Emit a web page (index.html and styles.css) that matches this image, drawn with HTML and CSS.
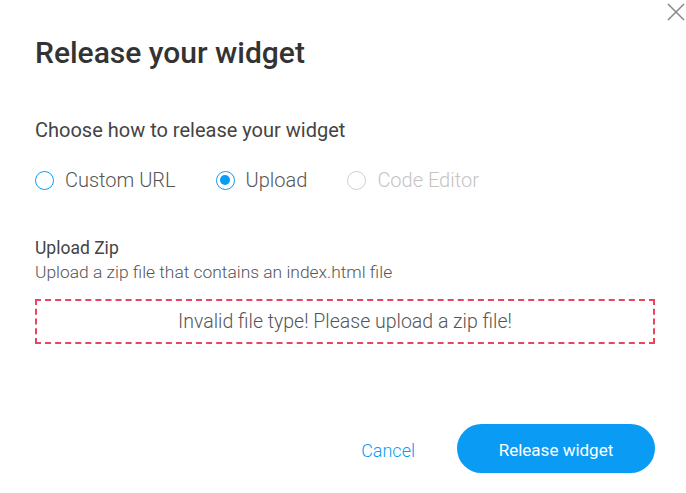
FILE: index.html
```html
<!DOCTYPE html>
<html lang="en">
<head>
<meta charset="utf-8">
<title>Release your widget</title>
<link rel="stylesheet" href="styles.css">
</head>
<body>
<div class="dialog">
  <button class="close" aria-label="Close">
    <svg width="18" height="18" viewBox="0 0 18 18"><path d="M1 1L17 17M17 1L1 17" stroke="#8a8a8a" stroke-width="1.6" fill="none"/></svg>
  </button>
  <h1 class="title">Release your widget</h1>
  <p class="prompt">Choose how to release your widget</p>
  <div class="radios">
    <label class="radio"><span class="dot"></span>Custom URL</label>
    <label class="radio checked"><span class="dot"></span>Upload</label>
    <label class="radio disabled"><span class="dot"></span>Code Editor</label>
  </div>
  <div class="field-label">Upload Zip</div>
  <div class="field-help">Upload a zip file that contains an index.html file</div>
  <div class="dropzone">Invalid file type! Please upload a zip file!</div>
  <div class="actions">
    <button class="btn-cancel">Cancel</button>
    <button class="btn-primary">Release widget</button>
  </div>
</div>
</body>
</html>
```

FILE: styles.css
```css
* { box-sizing: border-box; }
html, body {
  margin: 0;
  padding: 0;
  background: #fff;
  font-family: Roboto, "Noto Sans", sans-serif;
}
.dialog {
  position: relative;
  width: 686px;
  height: 493px;
  padding: 35px 31px 20px 35px;
  display: flex;
  flex-direction: column;
}
.close {
  position: absolute;
  top: 3px;
  right: 1px;
  border: 0;
  background: none;
  padding: 0;
  width: 18px;
  height: 18px;
  cursor: pointer;
}
.close svg { display: block; }
.title {
  margin: 0;
  font-size: 30px;
  line-height: 36px;
  font-weight: 500;
  color: #333;
}
.prompt {
  margin: 47px 0 0;
  font-size: 20px;
  line-height: 24px;
  color: #444;
}
.radios {
  margin-top: 26px;
  display: flex;
  gap: 40px;
}
.radio {
  display: flex;
  align-items: center;
  gap: 11px;
  font-size: 20px;
  line-height: 24px;
  font-weight: 300;
  color: #555;
}
.dot {
  width: 19px;
  height: 19px;
  border: 1.6px solid #0a9cf5;
  border-radius: 50%;
  display: flex;
  align-items: center;
  justify-content: center;
}
.radio.checked .dot::after {
  content: "";
  width: 10px;
  height: 10px;
  border-radius: 50%;
  background: #0a9cf5;
}
.radio.disabled { color: #c4c4c4; }
.radio.disabled .dot { border-color: #d0d0d0; }
.field-label {
  margin-top: 46px;
  font-size: 17.5px;
  line-height: 21px;
  color: #444;
}
.field-help {
  margin-top: 3px;
  font-size: 17.4px;
  line-height: 21px;
  font-weight: 300;
  color: #555;
}
.dropzone {
  margin-top: 16px;
  height: 45px;
  border: 2px dashed #e8455f;
  display: flex;
  align-items: center;
  justify-content: center;
  font-size: 19.5px;
  font-weight: 300;
  color: #555;
}
.actions {
  margin-top: auto;
  display: flex;
  justify-content: flex-end;
  align-items: center;
  gap: 42px;
}
.btn-cancel {
  border: 0;
  background: none;
  padding: 0;
  margin-top: 3px;
  font-family: inherit;
  font-size: 18px;
  font-weight: 300;
  color: #0a9cf5;
  cursor: pointer;
}
.btn-primary {
  width: 198px;
  height: 49px;
  padding-top: 3px;
  border: 0;
  border-radius: 25px;
  background: #0a9cf5;
  color: #fff;
  font-family: inherit;
  font-size: 17px;
  font-weight: 400;
  cursor: pointer;
}
```
